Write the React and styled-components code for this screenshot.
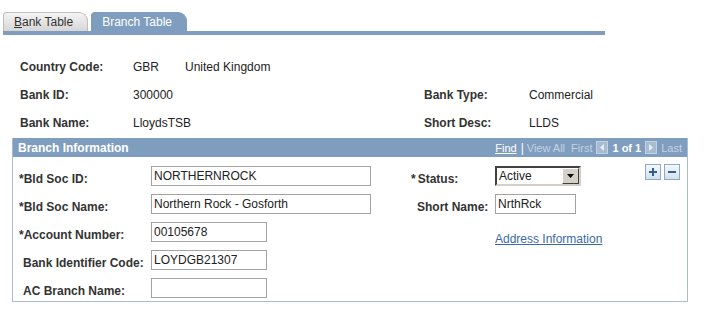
import React from 'react'
import styled, { createGlobalStyle } from 'styled-components'

const Global = createGlobalStyle`
  body{
    margin: 0;
    background: #fff;
    font-family: "Liberation Sans", Arial, sans-serif;
    font-size: 12px;
    color: #333;
  }
`
const Page = styled.div`
  width: 715px;
  height: 319px;
  padding-top: 12px;
  box-sizing: border-box;
`
const TabBar = styled.div`
  display: flex;
  align-items: flex-end;
  gap: 3px;
  width: 602px;
  margin-left: 3px;
  border-bottom: 4px solid #7f9ebf;
`
const Tab = styled.div`
  height: 19px;
  box-sizing: border-box;
  padding: 0 14px 0 10px;
  display: flex;
  align-items: center;
  font-size: 12px;
  border-radius: 4px 9px 0 0;
  color: ${p => p.$active ? '#fff' : '#333'};
  background: ${p => p.$active ? '#7f9ebf' : 'linear-gradient(#f4f4f4, #d6d6d6)'};
  border: 1px solid ${p => p.$active ? '#7f9ebf' : '#bdbdbd'};
  border-bottom: none;
  & u{ text-decoration: underline; }
`
const Info = styled.div`
  display: grid;
  grid-template-columns: 113px 291px 105px auto;
  grid-auto-rows: 28px;
  align-items: center;
  margin: 18px 0 1px 20px;
`
const Label = styled.span`
  font-weight: bold;
  color: #333;
  white-space: nowrap;
`
const Value = styled.span`
  color: #222;
  display: flex;
  gap: 26px;
`
const Box = styled.section`
  width: 676px;
  margin-left: 12px;
  box-sizing: border-box;
  border: 1px solid #a7bdd6;
  border-top: none;
`
const Header = styled.div`
  height: 19px;
  background: #7f9ebf;
  display: flex;
  align-items: center;
  justify-content: space-between;
  padding: 0 5px 0 5px;
  color: #fff;
`
const Title = styled.span`
  font-weight: bold;
  font-size: 12px;
`
const Nav = styled.div`
  display: flex;
  align-items: center;
  font-size: 11px;
  color: #c5d2e2;
`
const NavLink = styled.span`
  color: ${p => p.$on ? '#fff' : '#c5d2e2'};
  text-decoration: ${p => p.$under ? 'underline' : 'none'};
  font-weight: ${p => p.$bold ? 'bold' : 'normal'};
  margin-right: ${p => p.$mr || 0}px;
`
const Sep = styled.span`
  color: #fff;
  margin: 0 3px 0 4px;
  font-size: 12px;
`
const Body = styled.div`
  display: grid;
  grid-template-columns: 128px 266px 78px 150px 1fr;
  grid-auto-rows: 20px;
  row-gap: 8px;
  padding: 9px 0 3px 10px;
`
const FieldLabel = styled.span`
  font-weight: bold;
  color: #333;
  white-space: nowrap;
  align-self: end;
  line-height: 14px;
  & i{
    font-style: normal;
    margin-left: -${p => p.$star}px;
    margin-right: ${p => p.$gap || 0}px;
  }
`
const Input = styled.input`
  width: ${p => p.$w}px;
  height: 20px;
  box-sizing: border-box;
  border: 1px solid #a3a3a3;
  padding: 0 2px;
  font-family: "Liberation Sans", Arial, sans-serif;
  font-size: 12px;
  color: #222;
  outline: none;
  background: #fff;
`
const Select = styled.div`
  width: 86px;
  height: 20px;
  box-sizing: border-box;
  border: 2px solid;
  border-color: #404040 #d4d0c8 #d4d0c8 #404040;
  display: flex;
  align-items: center;
  justify-content: space-between;
  padding-left: 2px;
  font-size: 12px;
  color: #222;
  background: #fff;
`
const DropBtn = styled.span`
  width: 17px;
  height: 16px;
  box-sizing: border-box;
  background: #d4d0c8;
  border: 1px solid;
  border-color: #fff #404040 #404040 #fff;
  display: flex;
  align-items: center;
  justify-content: center;
`
const Link = styled.a`
  color: #3b69a6;
  text-decoration: underline;
  align-self: end;
  line-height: 14px;
  margin-bottom: -4px;
  white-space: nowrap;
`
const RowBtns = styled.div`
  display: flex;
  gap: 3px;
  align-self: start;
  margin-top: -2px;
`
const IconBtn = styled.span`
  width: 16px;
  height: 16px;
  box-sizing: border-box;
  border: 1px solid #8ea9c6;
  background: linear-gradient(#f4f7fb, #d5e0ec);
  display: flex;
  align-items: center;
  justify-content: center;
`

const Arrow = ({ dir }) => (
  <svg width="12" height="13" viewBox="0 0 12 13" style={{ margin: '0 4px' }}>
    <rect x="0" y="0" width="12" height="13" fill="#a7bbd3" />
    <rect x="0.5" y="0.5" width="11" height="12" fill="none" stroke="#c3d1e1" />
    {dir === 'l'
      ? <polygon points="8,3 8,10 4,6.5" fill="#e9eff6" />
      : <polygon points="4,3 4,10 8,6.5" fill="#e9eff6" />}
  </svg>
)

export default function App() {
  return (
    <Page>
      <Global />
      <TabBar>
        <Tab><u>B</u>ank Table</Tab>
        <Tab $active>Branch Table</Tab>
      </TabBar>

      <Info>
        <Label>Country Code:</Label>
        <Value><span>GBR</span><span>United Kingdom</span></Value>
        <span />
        <span />
        <Label>Bank ID:</Label>
        <Value>300000</Value>
        <Label>Bank Type:</Label>
        <Value>Commercial</Value>
        <Label>Bank Name:</Label>
        <Value>LloydsTSB</Value>
        <Label>Short Desc:</Label>
        <Value>LLDS</Value>
      </Info>

      <Box>
        <Header>
          <Title>Branch Information</Title>
          <Nav>
            <NavLink $on $under>Find</NavLink>
            <Sep>|</Sep>
            <NavLink $mr={6}>View All</NavLink>
            <NavLink>First</NavLink>
            <Arrow dir="l" />
            <NavLink $on $bold>1 of 1</NavLink>
            <Arrow dir="r" />
            <NavLink>Last</NavLink>
          </Nav>
        </Header>
        <Body>
          <FieldLabel $star={4}><i>*</i>Bld Soc ID:</FieldLabel>
          <Input $w={220} readOnly defaultValue="NORTHERNROCK" />
          <FieldLabel $star={6} $gap={2}><i>*</i>Status:</FieldLabel>
          <Select>
            Active
            <DropBtn>
              <svg width="7" height="4" viewBox="0 0 7 4"><polygon points="0,0 7,0 3.5,4" fill="#000" /></svg>
            </DropBtn>
          </Select>
          <RowBtns>
            <IconBtn>
              <svg width="10" height="10" viewBox="0 0 10 10"><path d="M5 1v8M1 5h8" stroke="#2f5f93" strokeWidth="2" /></svg>
            </IconBtn>
            <IconBtn>
              <svg width="10" height="10" viewBox="0 0 10 10"><path d="M1 5h8" stroke="#2f5f93" strokeWidth="2" /></svg>
            </IconBtn>
          </RowBtns>

          <FieldLabel $star={4}><i>*</i>Bld Soc Name:</FieldLabel>
          <Input $w={220} readOnly defaultValue="Northern Rock - Gosforth" />
          <FieldLabel>Short Name:</FieldLabel>
          <Input $w={81} readOnly defaultValue="NrthRck" />
          <span />

          <FieldLabel $star={4}><i>*</i>Account Number:</FieldLabel>
          <Input $w={116} readOnly defaultValue="00105678" />
          <span />
          <Link href="#">Address Information</Link>
          <span />

          <FieldLabel>Bank Identifier Code:</FieldLabel>
          <Input $w={116} readOnly defaultValue="LOYDGB21307" />
          <span />
          <span />
          <span />

          <FieldLabel>AC Branch Name:</FieldLabel>
          <Input $w={116} readOnly defaultValue="" />
        </Body>
      </Box>
    </Page>
  )
}
